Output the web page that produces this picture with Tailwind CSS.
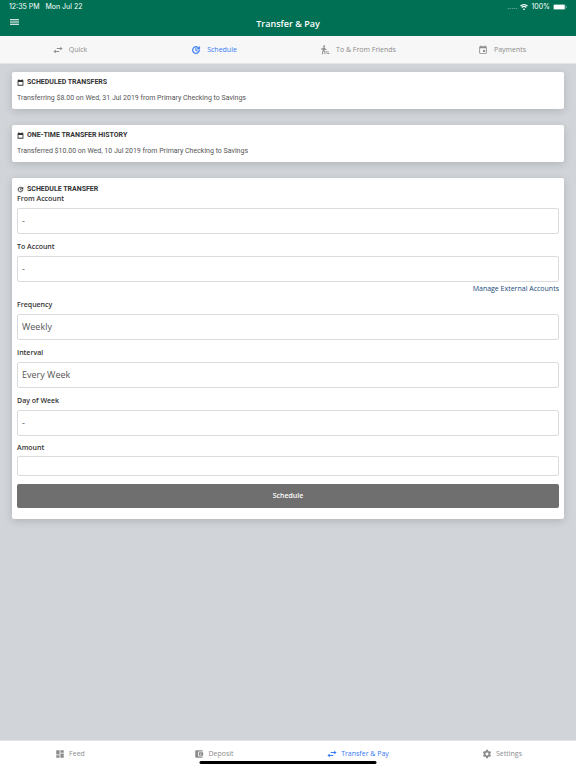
<!DOCTYPE html>
<html lang="en">
<head>
    <meta charset="utf-8">
    <meta name="viewport" content="width=device-width, initial-scale=1">
    <title>Transfer &amp; Pay</title>
    <script src="https://cdn.jsdelivr.net/npm/@tailwindcss/browser@4"></script>
</head>
<body class="flex flex-col min-h-screen bg-[#d1d5da] font-['Open_Sans',sans-serif] text-[7px] leading-[10px] text-[#555]">
    <!-- Icons shared by the tab bars and cards -->
    <svg class="hidden">
        <symbol id="swap" viewBox="0 0 24 24"><path d="M6.500 11 1 15.500 6.500 20v-3.300H15v-2.400H6.500zM23 8.500 17.500 4v3.300H9v2.400h8.500V13z"/></symbol>
        <symbol id="update" viewBox="0 0 24 24"><path stroke="currentColor" stroke-width=".8" d="M21 10.120h-6.780l2.740-2.820c-2.730-2.700-7.150-2.800-9.880-.100-2.730 2.710-2.730 7.080 0 9.790s7.150 2.710 9.880 0C18.320 15.650 19 14.080 19 12.100h2c0 1.980-.880 4.550-2.640 6.290-3.510 3.480-9.210 3.480-12.720 0-3.500-3.470-3.530-9.110-.020-12.580s9.140-3.470 12.650 0L21 3v7.120zM12.500 8v4.250l3.500 2.080-.720 1.210L11 13V8h1.500z"/></symbol>
        <symbol id="calendar" viewBox="0 0 24 24"><path d="M20 3h-1V1h-3v2H8V1H5v2H4c-1.100 0-2 .900-2 2v16c0 1.100.900 2 2 2h16c1.100 0 2-.900 2-2V5c0-1.100-.900-2-2-2zm-1 17H5V10h14v10z"/></symbol>
        <symbol id="event" viewBox="0 0 24 24"><path d="M17 12h-5v5h5v-5zM16 1v2H8V1H6v2H5c-1.110 0-1.990.900-1.990 2L3 19c0 1.100.890 2 2 2h14c1.100 0 2-.900 2-2V5c0-1.100-.900-2-2-2h-1V1h-2zm3 18H5V8h14v11z"/></symbol>
        <symbol id="friends" viewBox="0 0 24 24"><circle cx="10" cy="3" r="2.200"/><path d="M7.300 8.200 4.200 22h2.600l1.700-7.500 2.200 2V22h2.200v-7l-2.200-2.100.6-3c1 1.300 2.600 2.100 4.500 2.100v-2c-1.600 0-2.900-.8-3.600-2l-.9-1.500c-.6-.9-1.500-1.100-2.500-.7L3.500 7.500V12h2.200V8.900z"/><path d="M16.500 14 14 16.500l2.500 2.500v-1.600H21v-1.800h-4.500zM20.500 18v1.600H16v1.800h4.500V23l2.500-2.500z"/></symbol>
    </svg>

    <header class="bg-[#007054] text-white">
        <div class="flex items-center justify-between h-[14px] px-[9px] font-['Inter',sans-serif]">
            <div class="flex gap-[6px]">
                <span>12:35 PM</span>
                <span>Mon Jul 22</span>
            </div>
            <div class="flex items-center gap-[3px]">
                <span class="text-white/60">.....</span>
                <svg class="w-2 h-2" viewBox="0 0 16 16" fill="none" stroke="currentColor" stroke-width="2.400"><path d="M1 6c4-4 10-4 14 0M3.500 9c2.600-2.400 6.400-2.400 9 0"/><path d="M8 14.500 5.500 11.800q2.500-2 5 0z" fill="currentColor" stroke="none"/></svg>
                <span>100%</span>
                <svg class="w-[14px] h-[6px]" viewBox="0 0 28 12"><rect x=".5" y=".5" width="24" height="11" rx="3" fill="none" stroke="#fff" stroke-opacity=".5"/><rect x="1.500" y="1.500" width="22" height="9" rx="2" fill="#fff"/><path d="M26 4v4q1.500-.5 1.500-2T26 4z" fill="#fff" fill-opacity=".6"/></svg>
            </div>
        </div>
        <div class="grid grid-cols-3 items-center h-[22px] px-[10px] pb-[3px]">
            <button type="button" aria-label="Menu" class="justify-self-start pb-1">
                <svg class="block w-[9px] h-[6px]" viewBox="0 0 18 12" stroke="#fff" stroke-width="1.600"><path d="M0 1h18M0 4.300h18M0 7.700h18M0 11h18"/></svg>
            </button>
            <h1 class="justify-self-center text-[9px] font-semibold whitespace-nowrap">Transfer &amp; Pay</h1>
        </div>
    </header>

    <nav class="grid grid-cols-4 h-7 bg-[#f7f7f7] border-b border-[#e4e4e4] text-[#8c8c8c] fill-current">
        <a href="#" class="flex items-center justify-center gap-[6px] pr-1"><svg class="w-[10px] h-[10px]"><use href="#swap"/></svg>Quick</a>
        <a href="#" class="flex items-center justify-center gap-[6px] pr-1 text-[#3478f6]"><svg class="w-[10px] h-[10px]"><use href="#update"/></svg>Schedule</a>
        <a href="#" class="flex items-center justify-center gap-[6px] pr-1"><svg class="w-[10px] h-[10px]"><use href="#friends"/></svg>To &amp; From Friends</a>
        <a href="#" class="flex items-center justify-center gap-[6px] pr-1"><svg class="w-[10px] h-[10px]"><use href="#event"/></svg>Payments</a>
    </nav>

    <main class="flex-1 flex flex-col gap-4 px-3 pt-2 pb-8">
        <section class="px-[5px] pt-[5px] pb-[6px] bg-white rounded-xs shadow-[0_2px_8px_rgba(0,0,0,0.16)]">
            <h2 class="flex items-center gap-[3px] font-bold text-[#333] font-['Roboto',sans-serif]"><svg class="w-[7px] h-[7px] fill-current"><use href="#calendar"/></svg>SCHEDULED TRANSFERS</h2>
            <p class="mt-[6px] font-['Roboto',sans-serif]">Transferring $8.00 on Wed, 31 Jul 2019 from Primary Checking to Savings</p>
        </section>

        <section class="px-[5px] pt-[5px] pb-[6px] bg-white rounded-xs shadow-[0_2px_8px_rgba(0,0,0,0.16)]">
            <h2 class="flex items-center gap-[3px] font-bold text-[#333] font-['Roboto',sans-serif]"><svg class="w-[7px] h-[7px] fill-current"><use href="#calendar"/></svg>ONE-TIME TRANSFER HISTORY</h2>
            <p class="mt-[6px] font-['Roboto',sans-serif]">Transferred $10.00 on Wed, 10 Jul 2019 from Primary Checking to Savings</p>
        </section>

        <section class="px-[5px] pt-[6px] pb-[11px] bg-white rounded-xs shadow-[0_2px_8px_rgba(0,0,0,0.16)]">
            <h2 class="flex items-center gap-[3px] font-bold text-[#333] font-['Roboto',sans-serif]"><svg class="w-[7px] h-[7px] fill-current"><use href="#update"/></svg>SCHEDULE TRANSFER</h2>
            <form class="text-[#333]">
                <label class="block mb-1 font-semibold" for="from-account">From Account</label>
                <select id="from-account" class="block appearance-none w-full h-[26px] px-1 mb-2 border border-[#d9dbdd] rounded-xs bg-white text-[9px] text-[#555]"><option>-</option></select>

                <label class="block mb-1 font-semibold" for="to-account">To Account</label>
                <select id="to-account" class="block appearance-none w-full h-[26px] px-1 mb-[2px] border border-[#d9dbdd] rounded-xs bg-white text-[9px] text-[#555]"><option>-</option></select>
                <a href="#" class="block mb-[6px] text-right text-[#204a7c]">Manage External Accounts</a>

                <label class="block mb-1 font-semibold" for="frequency">Frequency</label>
                <select id="frequency" class="block appearance-none w-full h-[26px] px-1 mb-2 border border-[#d9dbdd] rounded-xs bg-white text-[9px] text-[#555]"><option>Weekly</option></select>

                <label class="block mb-1 font-semibold" for="interval">Interval</label>
                <select id="interval" class="block appearance-none w-full h-[26px] px-1 mb-2 border border-[#d9dbdd] rounded-xs bg-white text-[9px] text-[#555]"><option>Every Week</option></select>

                <label class="block mb-1 font-semibold" for="day-of-week">Day of Week</label>
                <select id="day-of-week" class="block appearance-none w-full h-[26px] px-1 mb-[7px] border border-[#d9dbdd] rounded-xs bg-white text-[9px] text-[#555]"><option>-</option></select>

                <label class="block mb-[3px] font-semibold" for="amount">Amount</label>
                <input id="amount" type="text" class="block w-full h-5 px-1 mb-2 border border-[#d9dbdd] rounded-xs bg-white text-[9px]">

                <button type="button" class="block w-full h-6 rounded-xs bg-[#6f6f6f] font-semibold text-white">Schedule</button>
            </form>
        </section>
    </main>

    <footer class="relative h-7 bg-white border-t border-[#e4e4e4]">
        <nav class="grid grid-cols-4 pt-2 text-[#8c8c8c] fill-current">
            <a href="#" class="flex items-center justify-center gap-1 pr-1"><svg class="w-[10px] h-[10px]" viewBox="0 0 24 24"><path d="M3 13h8V3H3v10zm0 8h8v-6H3v6zm10 0h8V11h-8v10zm0-18v6h8V3h-8z"/></svg>Feed</a>
            <a href="#" class="flex items-center justify-center gap-1 pr-1"><svg class="w-[10px] h-[10px]" viewBox="0 0 24 24"><path d="M21 18v1c0 1.100-.900 2-2 2H5c-1.110 0-2-.900-2-2V5c0-1.100.890-2 2-2h14c1.100 0 2 .900 2 2v1h-9c-1.110 0-2 .900-2 2v8c0 1.100.890 2 2 2h9zm-9-2h10V8H12v8zm4-2.500c-.830 0-1.500-.670-1.500-1.500s.670-1.500 1.500-1.500 1.500.670 1.500 1.500-.670 1.500-1.500 1.500z"/></svg>Deposit</a>
            <a href="#" class="flex items-center justify-center gap-1 pr-1 text-[#3478f6]"><svg class="w-[10px] h-[10px]"><use href="#swap"/></svg>Transfer &amp; Pay</a>
            <a href="#" class="flex items-center justify-center gap-1 pr-1"><svg class="w-[10px] h-[10px]" viewBox="0 0 24 24"><path d="M19.430 12.980c.040-.320.070-.640.070-.980s-.030-.660-.070-.980l2.110-1.650c.190-.150.240-.420.120-.640l-2-3.460c-.120-.220-.390-.300-.610-.220l-2.490 1c-.520-.400-1.080-.730-1.690-.980l-.380-2.650C14.460 2.180 14.250 2 14 2h-4c-.250 0-.460.180-.490.420l-.380 2.650c-.610.250-1.170.590-1.690.980l-2.490-1c-.230-.090-.490 0-.610.220l-2 3.460c-.130.220-.070.490.120.640l2.110 1.650c-.040.320-.070.650-.070.980s.030.660.070.980l-2.110 1.650c-.190.150-.240.420-.120.640l2 3.460c.120.220.390.300.610.220l2.490-1c.520.400 1.080.730 1.690.980l.380 2.650c.030.240.240.420.490.420h4c.250 0 .460-.180.490-.420l.380-2.650c.610-.250 1.170-.590 1.690-.980l2.490 1c.230.090.490 0 .610-.220l2-3.460c.120-.220.070-.490-.120-.640l-2.110-1.650zM12 15.500c-1.930 0-3.500-1.570-3.500-3.500s1.570-3.500 3.500-3.500 3.500 1.570 3.500 3.500-1.570 3.500-3.500 3.500z"/></svg>Settings</a>
        </nav>
        <div class="absolute bottom-1 left-1/2 -translate-x-1/2 w-[177px] h-[3px] rounded-full bg-black"></div>
    </footer>
</body>
</html>
